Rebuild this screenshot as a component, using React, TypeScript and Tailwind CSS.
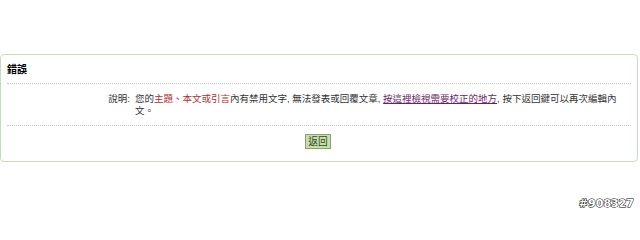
export default function App() {
  return (
    <div className="relative h-[216px] w-[640px] bg-white font-['Liberation_Sans','Noto_Sans_CJK_TC',sans-serif] text-[#333]">
      <div className="pt-[54px]">
        <div className="w-[638px] rounded-[4px] border border-[#c9dbbf] bg-white">
          {/* Header */}
          <div className="px-[6px]">
            <div className="flex h-[29px] items-center border-b border-dotted border-[#c8c8c8] text-[10px] font-bold text-black">
              錯誤
            </div>
          </div>

          {/* Message */}
          <div className="px-[6px]">
            <div className="flex border-b border-dotted border-[#c8c8c8] pt-[9px] pb-[8px] text-[9.5px] leading-[12px]">
              <div className="w-[123px] shrink-0 text-right">說明:</div>
              <div className="w-[493px] pl-[5px]">
                您的<span className="text-[#b03030]">主題、本文或引言</span>內有禁用文字, 無法發表或回覆文章,{' '}
                <a href="#" className="text-[#6b1f6b] underline">按這裡檢視需要校正的地方</a>, 按下返回鍵可以再次編輯內文。
              </div>
            </div>
          </div>

          {/* Button */}
          <div className="flex justify-center pt-[8px] pb-[12px]">
            <button className="ml-[-2px] h-[15px] border border-[#8aa46a] bg-[#c8dcae] px-[2px] text-[9.7px] leading-[13px] text-[#2f4a1a]">
              返回
            </button>
          </div>
        </div>
      </div>

      {/* Watermark */}
      <div className="absolute right-[6px] bottom-[4px] text-[11px] font-bold text-white [-webkit-text-stroke:1px_#000] [paint-order:stroke_fill] font-['DejaVu_Sans',sans-serif]">
        #908327
      </div>
    </div>
  );
}
